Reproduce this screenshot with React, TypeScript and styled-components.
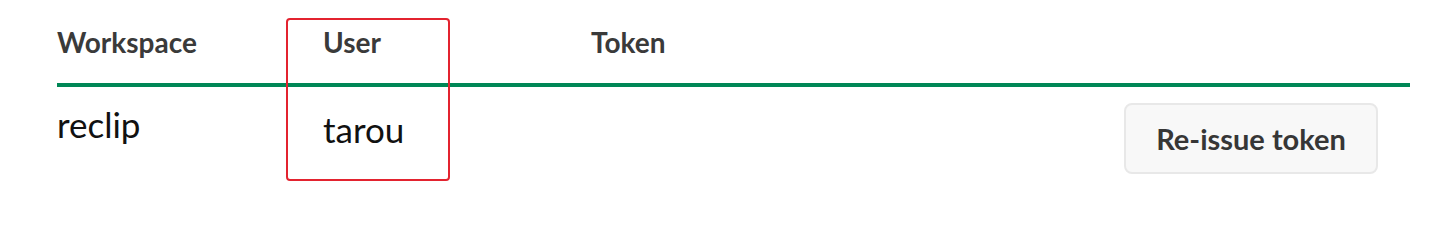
import styled, { createGlobalStyle } from "styled-components"

const GlobalStyle = createGlobalStyle`
  body {
    margin: 0;
    background: #ffffff;
    font-family: Lato, "Liberation Sans", sans-serif;
  }
`

const Page = styled.div`
  padding: 0 26px 0 57px;
  height: 228px;
  box-sizing: border-box;
`

const Table = styled.div`
  position: relative;
  display: grid;
  grid-template-columns: 266px 268px 1fr;
`

const HeadCell = styled.div`
  padding: 25px 0 24px;
  border-bottom: 4px solid #008756;
  font-family: Lato, sans-serif;
  font-weight: 700;
  font-size: 28px;
  line-height: 34px;
  color: #3a3a3a;
`

const Cell = styled.div<{ $top: number }>`
  padding-top: ${(p) => p.$top}px;
  font-family: Lato, sans-serif;
  font-size: 35px;
  line-height: 42px;
  color: #111111;
`

const ActionCell = styled.div`
  display: flex;
  justify-content: flex-end;
  padding: 16px 32px 16px 0;
`

const Button = styled.button`
  width: 254px;
  height: 71px;
  border: 2px solid #e8e8e8;
  border-radius: 8px;
  background: #f8f8f8;
  font-family: Lato, sans-serif;
  font-weight: 700;
  font-size: 29px;
  color: #363636;
  cursor: pointer;
`

const Highlight = styled.div`
  position: absolute;
  left: 229px;
  top: 18px;
  width: 164px;
  height: 163px;
  border: 2px solid #e3232f;
  border-radius: 4px;
  box-sizing: border-box;
  pointer-events: none;
`

export default function App() {
  return (
    <>
      <GlobalStyle />
      <Page>
        <Table>
          <HeadCell>Workspace</HeadCell>
          <HeadCell>User</HeadCell>
          <HeadCell>Token</HeadCell>
          <Cell $top={16}>reclip</Cell>
          <Cell $top={21}>tarou</Cell>
          <ActionCell>
            <Button>Re-issue token</Button>
          </ActionCell>
          <Highlight />
        </Table>
      </Page>
    </>
  )
}
